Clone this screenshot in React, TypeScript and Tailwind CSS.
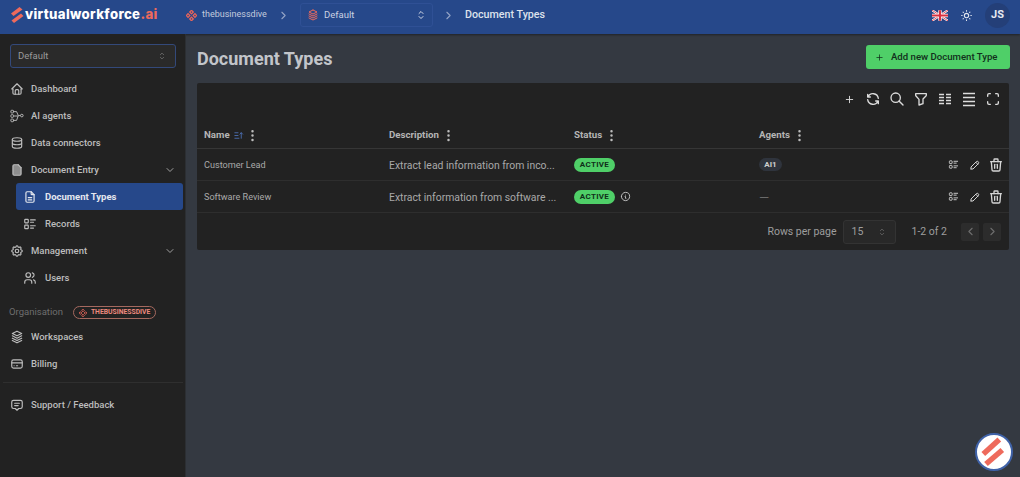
import React from "react";
import {
  TbHome, TbDatabase, TbChevronDown, TbChevronRight, TbChevronLeft, TbFileDescription, TbListDetails, TbSettings, TbUsers,
  TbStack3, TbCreditCard, TbMessage2, TbSelector, TbPlus, TbRefresh, TbSearch, TbFilter, TbMaximize, TbPencil, TbTrash,
  TbSun, TbInfoCircle, TbDotsVertical, TbSortAscending, TbFile,
} from "react-icons/tb";

const Diamond = ({ s = 14, c = "#e8655a" }: { s?: number; c?: string }) => (
  <svg width={s} height={s} viewBox="0 0 14 14" fill="none" stroke={c} strokeWidth="1.6">
    <rect x="5.4" y="1" width="3.2" height="3.2" transform="rotate(45 7 2.6)" />
    <rect x="5.4" y="9.8" width="3.2" height="3.2" transform="rotate(45 7 11.4)" />
    <rect x="1" y="5.4" width="3.2" height="3.2" transform="rotate(45 2.6 7)" />
    <rect x="9.8" y="5.4" width="3.2" height="3.2" transform="rotate(45 11.4 7)" />
  </svg>
);

const Logo = () => (
  <svg width="14" height="18" viewBox="0 0 14 18" fill="#ee6a5c">
    <path d="M9.5 1 L12.500 3.500 L3.500 10 L1 7.500 Z" />
    <path d="M11 7.500 L13.500 10 L4 17 L1.500 14.500 Z" />
  </svg>
);

const Flag = () => (
  <svg width="16" height="11" viewBox="0 0 60 40">
    <rect width="60" height="40" fill="#2a3f7d" />
    <path d="M0 0 L60 40 M60 0 L0 40" stroke="#fff" strokeWidth="8" />
    <path d="M0 0 L60 40 M60 0 L0 40" stroke="#d8303f" strokeWidth="3" />
    <path d="M30 0 V40 M0 20 H60" stroke="#fff" strokeWidth="13" />
    <path d="M30 0 V40 M0 20 H60" stroke="#d8303f" strokeWidth="8" />
  </svg>
);

const AgentIcon = () => (
  <svg width="14" height="14" viewBox="0 0 16 16" fill="none" stroke="#b8b8b8" strokeWidth="1.100">
    <rect x="1" y="1.500" width="3" height="3" rx=".8" />
    <rect x="1" y="6.500" width="3" height="3" rx=".8" />
    <rect x="1" y="11.500" width="3" height="3" rx=".8" />
    <circle cx="13.500" cy="7.500" r="1.500" />
    <path d="M4 3h3.500l2 4.500h2.500M4 8h5.500M4 13h3.500l2-5.500" />
  </svg>
);

const ColumnsIcon = () => (
  <svg width="14" height="12" viewBox="0 0 14 12" fill="none" stroke="currentColor" strokeWidth="1.700">
    <path d="M1 1.500h5M1 4.500h5M1 7.500h5M1 10.500h5M8 1.500h5M8 4.500h5M8 7.500h5M8 10.500h5" />
  </svg>
);

const DensityIcon = () => (
  <svg width="14" height="15" viewBox="0 0 14 15" fill="none" stroke="currentColor" strokeWidth="1.300">
    <path d="M1 1.500h12M1 5.500h12M1 9.500h12M1 13.500h12" />
  </svg>
);

const NavItem = ({ icon, label, chevron, sub, active }: { icon: React.ReactNode; label: string; chevron?: boolean; sub?: boolean; active?: boolean }) => (
  <div className={`flex h-[27px] items-center rounded-[3px] ${sub ? "ml-[7px] pl-[7px]" : "pl-px"} ${active ? "bg-[#26488a] text-[#e4e7ee]" : "text-[#bdbdbd]"}`}>
    <span className="flex w-[14px] justify-center">{icon}</span>
    <span className={`${sub ? "ml-[8px]" : "ml-[7px]"} flex-1 pt-px text-[9.500px] ${active ? "font-bold" : "font-medium"}`}>{label}</span>
    {chevron && <TbChevronDown className="mr-[7px] text-[#a0a0a0]" size={12} />}
  </div>
);

const Dots = () => <TbDotsVertical size={15} className="text-[#bdbdbd]" />;

const HeaderCell = ({ label, sort }: { label: string; sort?: boolean }) => (
  <div className="flex items-center pt-[8px] text-[9.700px] font-bold text-[#b5b5b5]">
    <span>{label}</span>
    {sort && <TbSortAscending size={11} className="ml-[3px] text-[#4a6db0]" />}
    <span className={sort ? "ml-px" : "ml-[2px]"}><Dots /></span>
  </div>
);

const Badge = () => (
  <span className="flex h-[14px] w-[41px] items-center justify-center rounded-full bg-[#4fcf68] text-[8px] font-bold tracking-[0.3px] text-[#10301a]">ACTIVE</span>
);

const RowActions = () => (
  <div className="flex items-center justify-end pr-[5px] text-[#d5d5d5]">
    <TbListDetails size={11} />
    <TbPencil size={12} className="ml-[10px]" />
    <TbTrash size={16} className="ml-[7px]" />
  </div>
);

const Row = ({ name, desc, info, agent }: { name: string; desc: string; info?: boolean; agent?: boolean }) => (
  <div className="grid h-[32px] grid-cols-[185px_185px_185px_1fr] items-center border-b border-[#2e2e2e] pl-[7px] text-[10.400px] text-[#a9a9a9]">
    <span className="pt-[2px] text-[9.100px]">{name}</span>
    <span className="pt-[2px]">{desc}</span>
    <span className="flex items-center gap-[5px]"><Badge />{info && <TbInfoCircle size={11} className="text-[#c8c8c8]" />}</span>
    <div className="flex items-center justify-between">
      {agent ? <span className="flex h-[13px] w-[23px] items-center justify-center rounded-full bg-[#2f343d] text-[8px] font-bold text-[#d0d0d0]">AI1</span> : <span className="pt-[2px] text-[13px] text-[#6a6a6a]">—</span>}
      <RowActions />
    </div>
  </div>
);

const Tool = ({ children }: { children: React.ReactNode }) => (
  <span className="flex w-[24px] justify-center">{children}</span>
);

export default function App() {
  return (
    <div className="flex h-[477px] w-[1020px] flex-col overflow-hidden bg-[#343941] font-['Roboto','Inter',sans-serif]">
      <header className="flex h-[34px] shrink-0 items-center bg-[#26488a] pb-[4px] text-[#d5dbe8] shadow-[0_1px_2px_rgba(0,0,0,0.4)]">
        <div className="ml-[10px] flex w-[176px] items-center">
          <Logo />
          <span className="ml-px whitespace-nowrap font-['Inter',sans-serif] text-[13.200px] font-extrabold tracking-[0.35px] text-white">virtualworkforce<span className="text-[#ee6a5c]">.ai</span></span>
        </div>
        <Diamond s={11} />
        <span className="ml-[5px] w-[65px] text-[9px] whitespace-nowrap text-[#c3cbdd]">thebusinessdive</span>
        <TbChevronRight size={13} className="ml-[10px] text-[#93a3c5]" />
        <div className="ml-[10px] flex h-[24px] w-[133px] items-center rounded-[3px] border border-[#2f5095] pl-[6px] pr-[5px]">
          <TbStack3 size={12} className="text-[#ee6a5c]" />
          <span className="ml-[5px] flex-1 text-[9.500px] text-[#c9d1e2]">Default</span>
          <TbSelector size={12} className="text-[#d5dbe8]" />
        </div>
        <TbChevronRight size={13} className="ml-[9px] text-[#93a3c5]" />
        <span className="ml-[10px] text-[10.700px] font-medium text-[#dde2ec]">Document Types</span>
        <div className="ml-auto flex items-center pr-[10px]">
          <Flag />
          <TbSun size={13} className="ml-[12px] text-[#e0e5ef]" />
          <span className="ml-[12px] flex h-[25px] w-[25px] items-center justify-center rounded-full bg-[#243f78] text-[11px] font-bold text-[#e6e9f0]">JS</span>
        </div>
      </header>
      <div className="flex min-h-0 flex-1">
        <aside className="w-[186px] shrink-0 border-r border-[#2c2f33] bg-[#222222] pl-[9px] pr-[2px] pt-[10px]">
          <div className="ml-px mr-[7px] flex h-[24px] items-center rounded-[3px] border border-[#33497a] bg-[#2a2a2a] pl-[7px] pr-[8px] text-[9.500px] text-[#9a9a9a]">
            <span className="flex-1 pt-px">Default</span>
            <TbSelector size={10} className="text-[#6f6f6f]" />
          </div>
          <nav className="mt-[7px]">
            <NavItem icon={<TbHome size={14} />} label="Dashboard" />
            <NavItem icon={<AgentIcon />} label="AI agents" />
            <NavItem icon={<TbDatabase size={14} />} label="Data connectors" />
            <NavItem icon={<TbFile size={14} fill="#8e8e8e" />} label="Document Entry" chevron />
            <NavItem icon={<TbFileDescription size={14} />} label="Document Types" sub active />
            <NavItem icon={<TbListDetails size={14} />} label="Records" sub />
            <NavItem icon={<TbSettings size={14} />} label="Management" chevron />
            <NavItem icon={<TbUsers size={14} />} label="Users" sub />
          </nav>
          <div className="mt-[11px] flex h-[21px] items-center">
            <span className="text-[9.500px] text-[#6e6e6e]">Organisation</span>
            <span className="ml-[10px] flex h-[13px] items-center rounded-full border border-[#a5695f] px-[5px] text-[6.800px] font-bold text-[#ee8a7e]">
              <Diamond s={8} />
              <span className="ml-[4px]">THEBUSINESSDIVE</span>
            </span>
          </div>
          <NavItem icon={<TbStack3 size={14} />} label="Workspaces" />
          <NavItem icon={<TbCreditCard size={14} />} label="Billing" />
          <div className="-ml-[6px] my-[5px] border-t border-[#2f2f2f]" />
          <div className="mt-[8px]">
            <NavItem icon={<TbMessage2 size={14} />} label="Support / Feedback" />
          </div>
        </aside>
        <main className="min-w-0 flex-1 pl-[11px] pr-[10px] pt-[11px]">
          <div className="flex h-[24px] items-center justify-between">
            <h1 className="pt-[2px] text-[18px] font-bold text-[#c2c5ca]">Document Types</h1>
            <button className="flex h-[24px] w-[144px] items-center rounded-[3px] bg-[#4fcf68] pl-[9px] text-[9.600px] font-medium whitespace-nowrap text-[#12301c]">
              <TbPlus size={9} />
              <span className="ml-[7px]">Add new Document Type</span>
            </button>
          </div>
          <section className="mt-[14px] mr-px rounded-[2px] bg-[#222222]">
            <div className="flex h-[32px] items-center justify-end pr-[4px] text-[#dcdcdc]">
              <Tool><TbPlus size={11} /></Tool>
              <Tool><TbRefresh size={16} /></Tool>
              <Tool><TbSearch size={16} /></Tool>
              <Tool><TbFilter size={16} /></Tool>
              <Tool><ColumnsIcon /></Tool>
              <Tool><DensityIcon /></Tool>
              <Tool><TbMaximize size={16} /></Tool>
            </div>
            <div className="grid h-[34px] grid-cols-[185px_185px_185px_1fr] items-center border-b border-[#363636] pl-[7px]">
              <HeaderCell label="Name" sort />
              <HeaderCell label="Description" />
              <HeaderCell label="Status" />
              <HeaderCell label="Agents" />
            </div>
            <Row name="Customer Lead" desc="Extract lead information from inco..." agent />
            <Row name="Software Review" desc="Extract information from software ..." info />
            <div className="flex h-[37px] items-center justify-end pr-[8px] text-[10.500px] text-[#9e9e9e]">
              <span className="pt-px">Rows per page</span>
              <div className="ml-[6px] flex h-[24px] w-[53px] items-center rounded-[3px] border border-[#333333] bg-[#282828] pl-[8px] pr-[8px] text-[10.500px]">
                <span className="flex-1">15</span>
                <TbSelector size={10} className="text-[#666666]" />
              </div>
              <span className="ml-[16px] pt-px">1-2 of 2</span>
              <span className="ml-[14px] flex h-[18px] w-[18px] items-center justify-center rounded-[2px] bg-[#2c2c2c] text-[#6e6e6e]"><TbChevronLeft size={13} /></span>
              <span className="ml-[4px] flex h-[18px] w-[18px] items-center justify-center rounded-[2px] bg-[#2c2c2c] text-[#6e6e6e]"><TbChevronRight size={13} /></span>
            </div>
          </section>
        </main>
      </div>
      <div className="absolute left-[975px] top-[433px] h-[38px] w-[38px] rounded-full border-2 border-[#3f62a8] bg-white">
        <svg className="-ml-[2px] -mt-[2px]" width="38" height="38" viewBox="0 0 38 38" fill="none" stroke="#ee6a5c" strokeWidth="5.500">
          <path d="M8.300 21 L24.300 6.500" />
          <path d="M11 31 L27.300 17" />
        </svg>
      </div>
    </div>
  );
}
